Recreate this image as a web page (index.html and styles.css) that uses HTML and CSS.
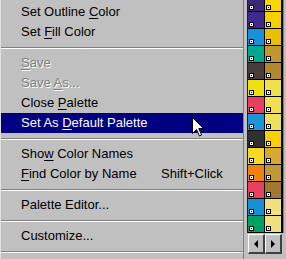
FILE: index.html
```html
<!DOCTYPE html>
<html lang="en">
<head>
  <meta charset="UTF-8">
  <link rel="stylesheet" href="styles.css">
</head>
<body>
  <div class="screen">
    <!-- context menu -->
    <ul class="menu">
      <li class="item"><span class="label">Set Outline <u>C</u>olor</span></li>
      <li class="item"><span class="label">Set <u>F</u>ill Color</span></li>
      <li class="sep"></li>
      <li class="item off"><span class="label"><u>S</u>ave</span></li>
      <li class="item off"><span class="label">Save <u>A</u>s...</span></li>
      <li class="item"><span class="label">Close <u>P</u>alette</span></li>
      <li class="item hot"><span class="label">Set As <u>D</u>efault Palette</span></li>
      <li class="sep"></li>
      <li class="item"><span class="label">Sho<u>w</u> Color Names</span></li>
      <li class="item"><span class="label"><u>F</u>ind Color by Name</span><span class="key">Shift+Click</span></li>
      <li class="sep"></li>
      <li class="item"><span class="label">Palette Editor...</span></li>
      <li class="sep"></li>
      <li class="item"><span class="label">Customize...</span></li>
      <li class="sep"></li>
    </ul>

    <!-- colour palette dock -->
    <div class="dock">
      <div class="swatches">
        <div class="grid">
          <div class="cell" style="background:#3a2878"></div>
          <div class="cell" style="background:#f8d800"></div>
          <div class="cell" style="background:#3c2a8c"></div>
          <div class="cell" style="background:#f8d000"></div>
          <div class="cell" style="background:#1a90d8"></div>
          <div class="cell" style="background:#e8c000"></div>
          <div class="cell" style="background:#00a890"></div>
          <div class="cell" style="background:#c09830"></div>
          <div class="cell" style="background:#4a3c38"></div>
          <div class="cell" style="background:#b08830"></div>
          <div class="cell" style="background:#f0e010"></div>
          <div class="cell" style="background:#f0e050"></div>
          <div class="cell" style="background:#e84060"></div>
          <div class="cell" style="background:#f0e050"></div>
          <div class="cell" style="background:#1898d8"></div>
          <div class="cell" style="background:#f0e060"></div>
          <div class="cell" style="background:#303030"></div>
          <div class="cell" style="background:#f8d000"></div>
          <div class="cell" style="background:#f8d820"></div>
          <div class="cell" style="background:#d8a830"></div>
          <div class="cell" style="background:#f08010"></div>
          <div class="cell" style="background:#c09838"></div>
          <div class="cell" style="background:#e84060"></div>
          <div class="cell" style="background:#a07830"></div>
          <div class="cell" style="background:#1890d8"></div>
          <div class="cell" style="background:#f0e080"></div>
          <div class="cell" style="background:#00a060"></div>
          <div class="cell" style="background:#f0e080"></div>
        </div>
      </div>
      <div class="scroll">
        <div class="btn"><span class="arrow left"></span></div>
        <div class="btn"><span class="arrow right"></span></div>
      </div>
    </div>

    <!-- mouse pointer -->
    <svg class="cursor" width="13" height="20" viewBox="0 0 13 20">
      <path d="M0.5 0.5 L0.5 16.5 L4.5 12.5 L7.5 19 L9.5 18 L6.8 11.5 L11.5 11.5 Z" fill="#fff" stroke="#000" stroke-width="1"/>
    </svg>
  </div>
</body>
</html>
```

FILE: styles.css
```css
body {
  margin: 0;
  background: #c0c0c0;
}

.screen {
  position: relative;
  display: flex;
  width: 286px;
  height: 259px;
  overflow: hidden;
  background: #c0c0c0;
  font-family: "Liberation Sans", Arial, sans-serif;
  font-size: 13px;
  color: #000;
}

/* menu */
.menu {
  list-style: none;
  margin: 0;
  padding: 2px 0 0 0;
  width: 242px;
  border-left: 1px solid #dfdfdf;
}

.item {
  display: flex;
  height: 20px;
  line-height: 20px;
  padding-left: 20px;
  white-space: nowrap;
}

.item .label {
  flex: 0 0 140px;
}

.item u {
  text-decoration-thickness: 1px;
  text-underline-offset: 2px;
}

.item.off {
  color: #808080;
  text-shadow: 1px 1px 0 #fff;
}

.item.hot {
  background: #000080;
  color: #fff;
}

.sep {
  height: 11px;
  position: relative;
}

.sep::after {
  content: "";
  position: absolute;
  left: 0;
  right: 0;
  top: 5px;
  height: 1px;
  background: #808080;
  border-bottom: 1px solid #fff;
}

/* palette dock */
.dock {
  display: flex;
  flex-direction: column;
  width: 43px;
  border-left: 1px solid #808080;
  box-sizing: border-box;
}

.swatches {
  height: 233px;
  overflow: hidden;
  margin-left: 3px;
  border-left: 1px solid #202020;
  border-right: 1px solid #808080;
  width: 35px;
}

.grid {
  display: grid;
  grid-template-columns: 16px 16px;
  grid-auto-rows: 16px;
  gap: 1px;
  padding: 1px 1px 1px 0;
  margin-top: -6px;
  width: 34px;
  background: #000;
}

.cell {
  position: relative;
}

.cell::after {
  content: "";
  position: absolute;
  left: 1px;
  bottom: 1px;
  width: 3px;
  height: 3px;
  border: 1px solid #000;
  background: #000;
  box-shadow: inset 0 0 0 1px #fff;
}

.scroll {
  display: flex;
  margin-left: 4px;
  margin-top: 1px;
}

.btn {
  width: 14px;
  height: 17px;
  background: #c0c0c0;
  border-top: 1px solid #fff;
  border-left: 1px solid #fff;
  border-right: 2px solid #404040;
  border-bottom: 2px solid #404040;
  display: flex;
  align-items: center;
  justify-content: center;
}

.arrow {
  width: 0;
  height: 0;
  border-top: 4px solid transparent;
  border-bottom: 4px solid transparent;
}

.arrow.left {
  border-right: 4px solid #000;
}

.arrow.right {
  border-left: 4px solid #000;
}

.cursor {
  position: absolute;
  left: 192px;
  top: 117px;
}
```
